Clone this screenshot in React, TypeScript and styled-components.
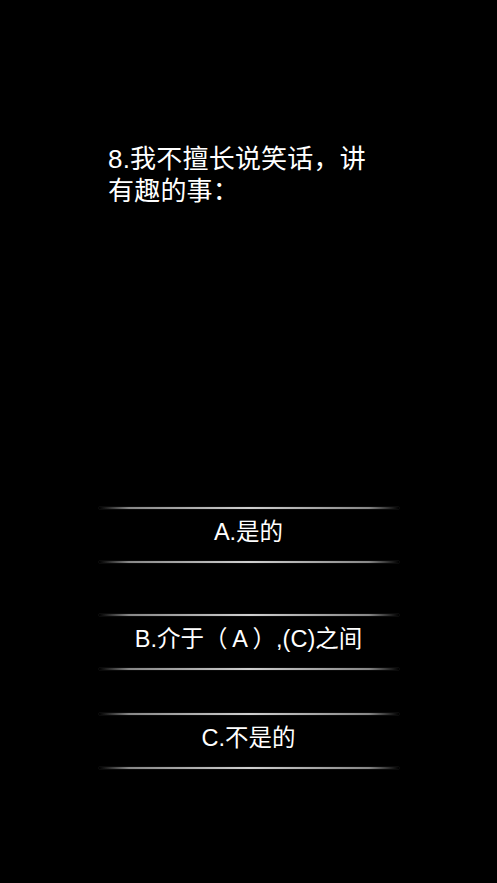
import styled, { createGlobalStyle } from "styled-components";

const GlobalStyle = createGlobalStyle`
	html, body {
		margin: 0;
		padding: 0;
		background: #000;
	}
	* {
		box-sizing: border-box;
	}
`;

const Page = styled.div`
	min-height: 883px;
	background: #000;
	color: #fff;
	font-family: "Liberation Sans", "Noto Sans CJK SC", sans-serif;
	display: flex;
	flex-direction: column;
`;

const Question = styled.h2`
	margin: 0;
	padding: 143px 0 0 108px;
	width: 390px;
	font-size: 26px;
	font-weight: normal;
	line-height: 32px;
	letter-spacing: 0.2px;
`;

const Options = styled.div`
	display: flex;
	flex-direction: column;
	align-items: center;
	margin-top: 300px;
`;

const Rule = styled.div`
	width: 300px;
	height: 2px;
	background: linear-gradient(
		to right,
		rgba(120, 120, 120, 0) 0%,
		rgba(150, 150, 150, 0.9) 10%,
		#cfcfcf 50%,
		rgba(150, 150, 150, 0.9) 90%,
		rgba(120, 120, 120, 0) 100%
	);
	box-shadow: 0 0 1px rgba(140, 140, 140, 0.8);
`;

const Option = styled.button<{ $offset: number }>`
	display: flex;
	flex-direction: column;
	align-items: center;
	width: 300px;
	margin-top: ${(p) => p.$offset}px;
	padding: 0;
	border: none;
	background: transparent;
	color: #fff;
	font: inherit;
	cursor: pointer;
`;

const Label = styled.span`
	display: flex;
	align-items: center;
	justify-content: center;
	height: 52px;
	padding-bottom: 4px;
	font-size: 23.5px;
	line-height: 1;
	white-space: pre;
`;

const options = [
	{ text: "A.是的", offset: 0 },
	{ text: "B.介于（\u2009A\u2009）,(C)之间", offset: 51 },
	{ text: "C.不是的", offset: 43 },
];

export default function App() {
	return (
		<>
			<GlobalStyle />
			<Page>
				<Question>
					8.我不擅长说笑话，讲
					<br />
					有趣的事：
				</Question>
				<Options>
					{options.map((o) => (
						<Option key={o.text} $offset={o.offset}>
							<Rule />
							<Label>{o.text}</Label>
							<Rule />
						</Option>
					))}
				</Options>
			</Page>
		</>
	);
}
